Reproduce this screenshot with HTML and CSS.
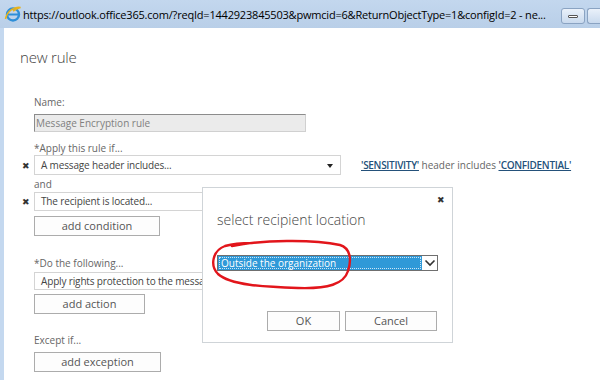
FILE: index.html
```html
<!DOCTYPE html>
<html>
<head>
<meta charset="utf-8">
<link rel="stylesheet" href="styles.css">
</head>
<body>
<div class="window">
  <div class="titlebar">
    <svg class="ie" width="18" height="18" viewBox="0 0 18 18">
      <ellipse cx="9" cy="9.5" rx="6" ry="6" fill="none" stroke="#2e8fd8" stroke-width="2.4"/>
      <path d="M3.5 9.5 H14.5" stroke="#2e8fd8" stroke-width="2"/>
      <path d="M1.5 14 C3 6 11 1 16.5 2.5 C14 3 11 4.5 9 6" fill="none" stroke="#e8b31c" stroke-width="1.6"/>
    </svg>
    <span class="url">https://outlook.office365.com/?reqId=1442923845503&amp;pwmcid=6&amp;ReturnObjectType=1&amp;configId=2 - ne...</span>
    <div class="winbtns">
      <div class="winbtn"><span class="dash"></span></div>
      <div class="winbtn cut"></div>
    </div>
  </div>
  <div class="content">
    <h1 class="heading">new rule</h1>
    <div class="form">
      <div class="label first">Name:</div>
      <div class="namebox">Message Encryption rule</div>

      <div class="label gap9">*Apply this rule if...</div>
      <div class="row">
        <span class="xmark">&#x2716;</span>
        <div class="select sel1">A message header includes...<span class="caret"></span></div>
        <div class="desc"><a class="lnk">'SENSITIVITY'</a> header includes <a class="lnk">'CONFIDENTIAL'</a></div>
      </div>
      <div class="label gap2">and</div>
      <div class="row">
        <span class="xmark">&#x2716;</span>
        <div class="select sel2">The recipient is located...</div>
      </div>
      <button class="btn b-cond">add condition</button>

      <div class="label gap20">*Do the following...</div>
      <div class="select sel3">Apply rights protection to the message with...</div>
      <button class="btn b-act">add action</button>

      <div class="label gap19">Except if...</div>
      <button class="btn b-exc">add exception</button>
    </div>

    <div class="dialog">
      <div class="close">&#x2716;</div>
      <div class="dtitle">select recipient location</div>
      <div class="dselect">
        <div class="dsel-val"><span>Outside the organization</span></div>
        <div class="dsel-arrow">
          <svg width="12" height="8" viewBox="0 0 12 8"><path d="M1.5 1.5 L6 6 L10.5 1.5" fill="none" stroke="#333" stroke-width="1.6"/></svg>
        </div>
      </div>
      <div class="dbuttons">
        <button class="btn ok">OK</button>
        <button class="btn cancel">Cancel</button>
      </div>
    </div>

    <svg class="annot" width="600" height="380" viewBox="0 0 600 380">
      <path d="M232 246 C262 240 312 239 340 245 C350 248 352 259 348 271 C344 284 328 289 298 288 C264 287 230 285 218 274 C210 266 212 251 225 246 C232 244 242 243 252 243" fill="none" stroke="#e2151b" stroke-width="2.4" stroke-linecap="round"/>
    </svg>
  </div>
</div>
</body>
</html>
```

FILE: styles.css
```css
* { box-sizing: border-box; }
html, body { margin: 0; padding: 0; }
body {
  width: 600px;
  height: 380px;
  overflow: hidden;
  font-family: "Open Sans", "Noto Sans", sans-serif;
  color: #444;
  background: #fff;
}
.window {
  position: relative;
  width: 600px;
  height: 380px;
}
.titlebar {
  height: 28px;
  background: linear-gradient(#c3d7ee, #b9cfe8);
  display: flex;
  align-items: center;
  padding-left: 4px;
}
.ie { flex: none; margin-right: 1px; }
.url {
  font-size: 11px;
  color: #000;
  white-space: nowrap;
  letter-spacing: -0.2px;
}
.winbtns {
  margin-left: auto;
  display: flex;
  gap: 2px;
  align-self: flex-start;
  margin-top: 8px;
}
.winbtn {
  width: 24px;
  height: 16px;
  border: 1px solid #8aa3c2;
  border-radius: 3px;
  background: linear-gradient(#eaf1fa, #c9daee);
  display: flex;
  align-items: center;
  justify-content: center;
}
.winbtn.cut { width: 13px; border-right: none; border-radius: 3px 0 0 3px; }
.dash {
  width: 10px;
  height: 3px;
  background: #fff;
  border: 1px solid #555;
  border-radius: 1px;
}
.content {
  height: 352px;
  border-left: 4px solid #c4d8ef;
  padding-top: 19px;
  padding-left: 16px;
}
.heading {
  margin: 0;
  font-size: 15px;
  font-weight: 300;
  line-height: 20px;
  color: #444;
  letter-spacing: -0.2px;
}
.form { padding-left: 14px; }
.label {
  font-size: 10px;
  line-height: 14px;
  color: #666;
}
.label.first { margin-top: 28px; }
.gap9 { margin-top: 9px; }
.gap2 { margin-top: 2px; }
.gap20 { margin-top: 20px; }
.gap19 { margin-top: 19px; }
.namebox {
  margin-top: 5px;
  width: 272px;
  height: 18px;
  background: #ebebeb;
  border: 1px solid #d0d0d0;
  border-top-color: #8c8c8c;
  border-left-color: #8c8c8c;
  font-size: 10px;
  line-height: 16px;
  padding-left: 1px;
  color: #808080;
}
.row {
  display: flex;
  align-items: center;
  margin-left: -14px;
}
.xmark {
  width: 14px;
  font-size: 9px;
  color: #333;
  padding-left: 2px;
}
.select {
  position: relative;
  width: 307px;
  border: 1px solid #d4d4d4;
  background: #fff;
  font-size: 10px;
  letter-spacing: -0.15px;
  padding-left: 6px;
  color: #444;
  white-space: nowrap;
  overflow: hidden;
}
.sel1 { height: 20px; line-height: 18px; }
.sel2 { height: 19px; line-height: 17px; margin-top: 1px; }
.sel3 { height: 18px; line-height: 16px; margin-top: 2px; }
.caret {
  position: absolute;
  right: 7px;
  top: 8px;
  width: 0;
  height: 0;
  border-left: 3px solid transparent;
  border-right: 3px solid transparent;
  border-top: 4px solid #222;
}
.desc {
  margin-left: 20px;
  font-size: 10px;
  color: #666;
  white-space: nowrap;
}
.lnk {
  color: #24517a;
  text-decoration: underline;
  font-weight: 600;
  letter-spacing: -0.3px;
}
.btn {
  display: block;
  font-family: inherit;
  font-size: 11px;
  color: #555;
  background: #fdfdfd;
  border: 1px solid #acacac;
  height: 20px;
  padding: 0;
  line-height: 18px;
  text-align: center;
}
.b-cond { margin-top: 5px; width: 126px; }
.b-act { margin-top: 4px; width: 111px; }
.b-exc { margin-top: 5px; width: 127px; }

.dialog {
  position: absolute;
  left: 202px;
  top: 187px;
  width: 251px;
  height: 156px;
  background: #fff;
  border: 1px solid #cfd4d8;
  padding: 0 15px 0 14px;
}
.close {
  position: absolute;
  right: 7px;
  top: 5px;
  font-size: 9px;
  color: #333;
}
.dtitle {
  margin-top: 22px;
  font-size: 14px;
  font-weight: 300;
  line-height: 20px;
  color: #444;
}
.dselect {
  margin-top: 25px;
  width: 221px;
  height: 16px;
  border: 1px solid #6f6f6f;
  display: flex;
}
.dsel-val {
  flex: 1;
  background: #2f99d8;
  padding: 1px;
}
.dsel-val span {
  display: block;
  height: 12px;
  border: 1px dotted #cde6f6;
  color: #fff;
  font-size: 10px;
  line-height: 11px;
  padding-left: 1px;
}
.dsel-arrow {
  width: 15px;
  display: flex;
  align-items: center;
  justify-content: center;
  background: #fff;
}
.dbuttons {
  margin-top: 40px;
  display: flex;
  justify-content: flex-end;
  gap: 5px;
}
.ok { width: 73px; }
.cancel { width: 92px; }
.annot {
  position: absolute;
  left: 0;
  top: 0;
  pointer-events: none;
}
```
